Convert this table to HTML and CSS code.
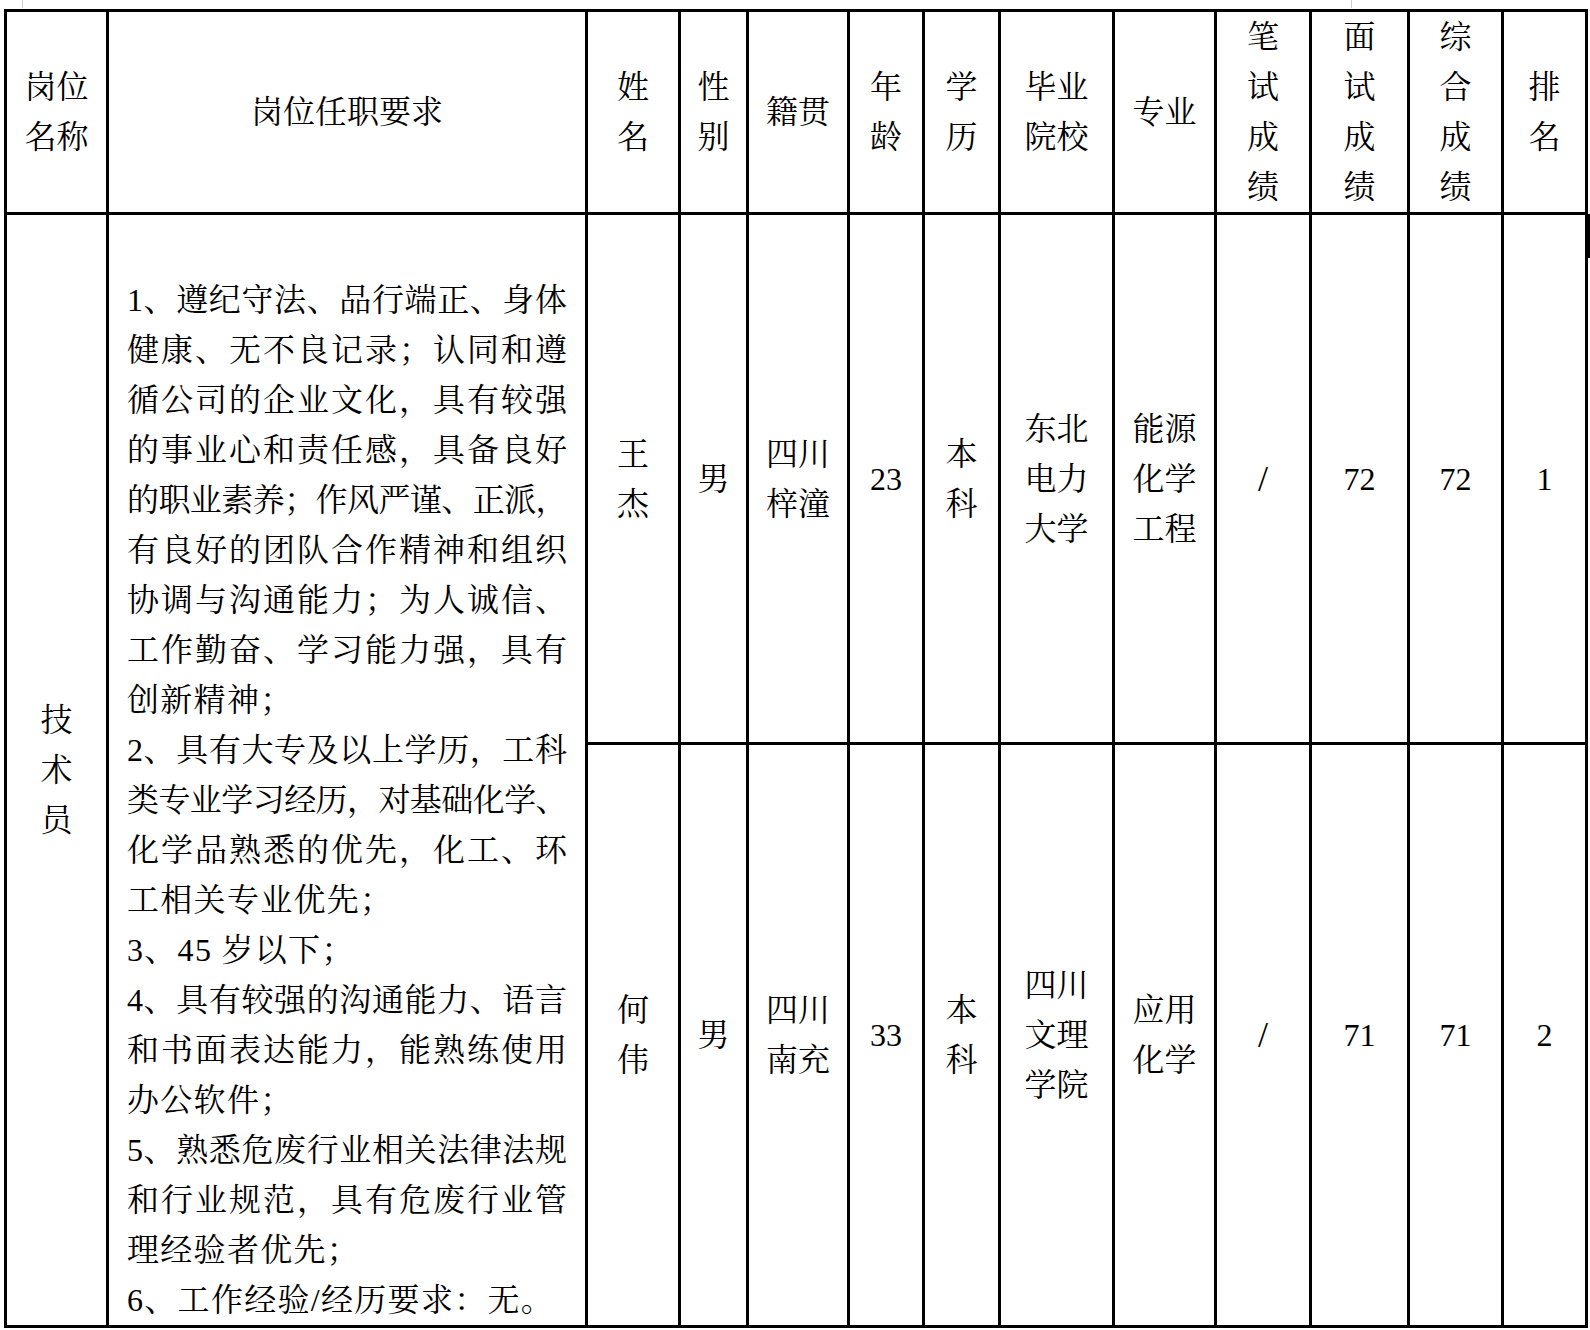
FILE: index.html
```html
<!DOCTYPE html>
<html lang="zh-CN">
<head>
<meta charset="utf-8">
<title>岗位任职要求</title>
<link rel="stylesheet" href="styles.css">
</head>
<body>
<div class="page">
  <div class="sheet">
    <div class="cell">岗位<br>名称</div>
    <div class="cell">岗位任职要求</div>
    <div class="cell">姓<br>名</div>
    <div class="cell">性<br>别</div>
    <div class="cell">籍贯</div>
    <div class="cell">年<br>龄</div>
    <div class="cell">学<br>历</div>
    <div class="cell">毕业<br>院校</div>
    <div class="cell">专业</div>
    <div class="cell">笔<br>试<br>成<br>绩</div>
    <div class="cell">面<br>试<br>成<br>绩</div>
    <div class="cell">综<br>合<br>成<br>绩</div>
    <div class="cell">排<br>名</div>

    <div class="cell span2">技<br>术<br>员</div>
    <div class="cell span2 req">
      <div class="ln j">1、遵纪守法、品行端正、身体</div>
      <div class="ln j">健康、无不良记录；认同和遵</div>
      <div class="ln j">循公司的企业文化，具有较强</div>
      <div class="ln j">的事业心和责任感，具备良好</div>
      <div class="ln j tight">的职业素养；作风严谨、正派，</div>
      <div class="ln j">有良好的团队合作精神和组织</div>
      <div class="ln j">协调与沟通能力；为人诚信、</div>
      <div class="ln j">工作勤奋、学习能力强，具有</div>
      <div class="ln">创新精神；</div>
      <div class="ln j">2、具有大专及以上学历，工科</div>
      <div class="ln j tight">类专业学习经历，对基础化学、</div>
      <div class="ln j">化学品熟悉的优先，化工、环</div>
      <div class="ln">工相关专业优先；</div>
      <div class="ln">3、45 岁以下；</div>
      <div class="ln j">4、具有较强的沟通能力、语言</div>
      <div class="ln j">和书面表达能力，能熟练使用</div>
      <div class="ln">办公软件；</div>
      <div class="ln j">5、熟悉危废行业相关法律法规</div>
      <div class="ln j">和行业规范，具有危废行业管</div>
      <div class="ln">理经验者优先；</div>
      <div class="ln">6、工作经验/经历要求：无。</div>
    </div>

    <div class="cell">王<br>杰</div>
    <div class="cell">男</div>
    <div class="cell">四川<br>梓潼</div>
    <div class="cell">23</div>
    <div class="cell">本<br>科</div>
    <div class="cell">东北<br>电力<br>大学</div>
    <div class="cell">能源<br>化学<br>工程</div>
    <div class="cell"><span class="slash">/</span></div>
    <div class="cell">72</div>
    <div class="cell">72</div>
    <div class="cell">1</div>

    <div class="cell">何<br>伟</div>
    <div class="cell">男</div>
    <div class="cell">四川<br>南充</div>
    <div class="cell">33</div>
    <div class="cell">本<br>科</div>
    <div class="cell">四川<br>文理<br>学院</div>
    <div class="cell">应用<br>化学</div>
    <div class="cell"><span class="slash">/</span></div>
    <div class="cell">71</div>
    <div class="cell">71</div>
    <div class="cell">2</div>
  </div>
  <span class="mark corner"></span>
  <span class="mark tick"></span>
  <span class="mark edge"></span>
</div>
</body>
</html>
```

FILE: styles.css
```css
html, body {
  margin: 0;
  padding: 0;
  background: #fff;
}

.page {
  position: relative;
  padding: 9px 0 0 4px;
  width: 1590px;
  height: 1330px;
  box-sizing: border-box;
  overflow: hidden;
}

.sheet {
  display: grid;
  width: 1584px;
  box-sizing: border-box;
  grid-template-columns: 102px 479px 93px 68px 101px 75px 76px 114px 102px 95px 98px 94px 84px;
  grid-template-rows: 203px 530px 583px;
  border-left: 3px solid #000;
  border-top: 3px solid #000;
  font-family: "Liberation Serif", "Noto Serif CJK SC", "Noto Sans CJK SC", serif;
  font-size: 32px;
  line-height: 50px;
  color: #000;
}

.cell {
  box-sizing: border-box;
  border-right: 3px solid #000;
  border-bottom: 3px solid #000;
  display: flex;
  align-items: center;
  justify-content: center;
  text-align: center;
  overflow: visible;
}

.span2 {
  grid-row: span 2;
}

.req {
  flex-direction: column;
  justify-content: flex-end;
  align-items: stretch;
  padding: 0 18px;
  text-align: left;
}

.ln {
  height: 50px;
  white-space: nowrap;
  letter-spacing: 1.3px;
}

.j {
  letter-spacing: 0;
  text-align: justify;
  text-align-last: justify;
}

.tight {
  letter-spacing: -0.6px;
}

.slash {
  font-size: 36px;
}

.mark {
  position: absolute;
  display: block;
}

.corner {
  left: 22px;
  top: 0;
  width: 1px;
  height: 8px;
  background: #cfcfcf;
}

.tick {
  left: 1351px;
  top: 0;
  width: 1px;
  height: 8px;
  background: #cfcfcf;
}

.edge {
  left: 1588px;
  top: 214px;
  width: 2px;
  height: 44px;
  background: #000;
}
```
